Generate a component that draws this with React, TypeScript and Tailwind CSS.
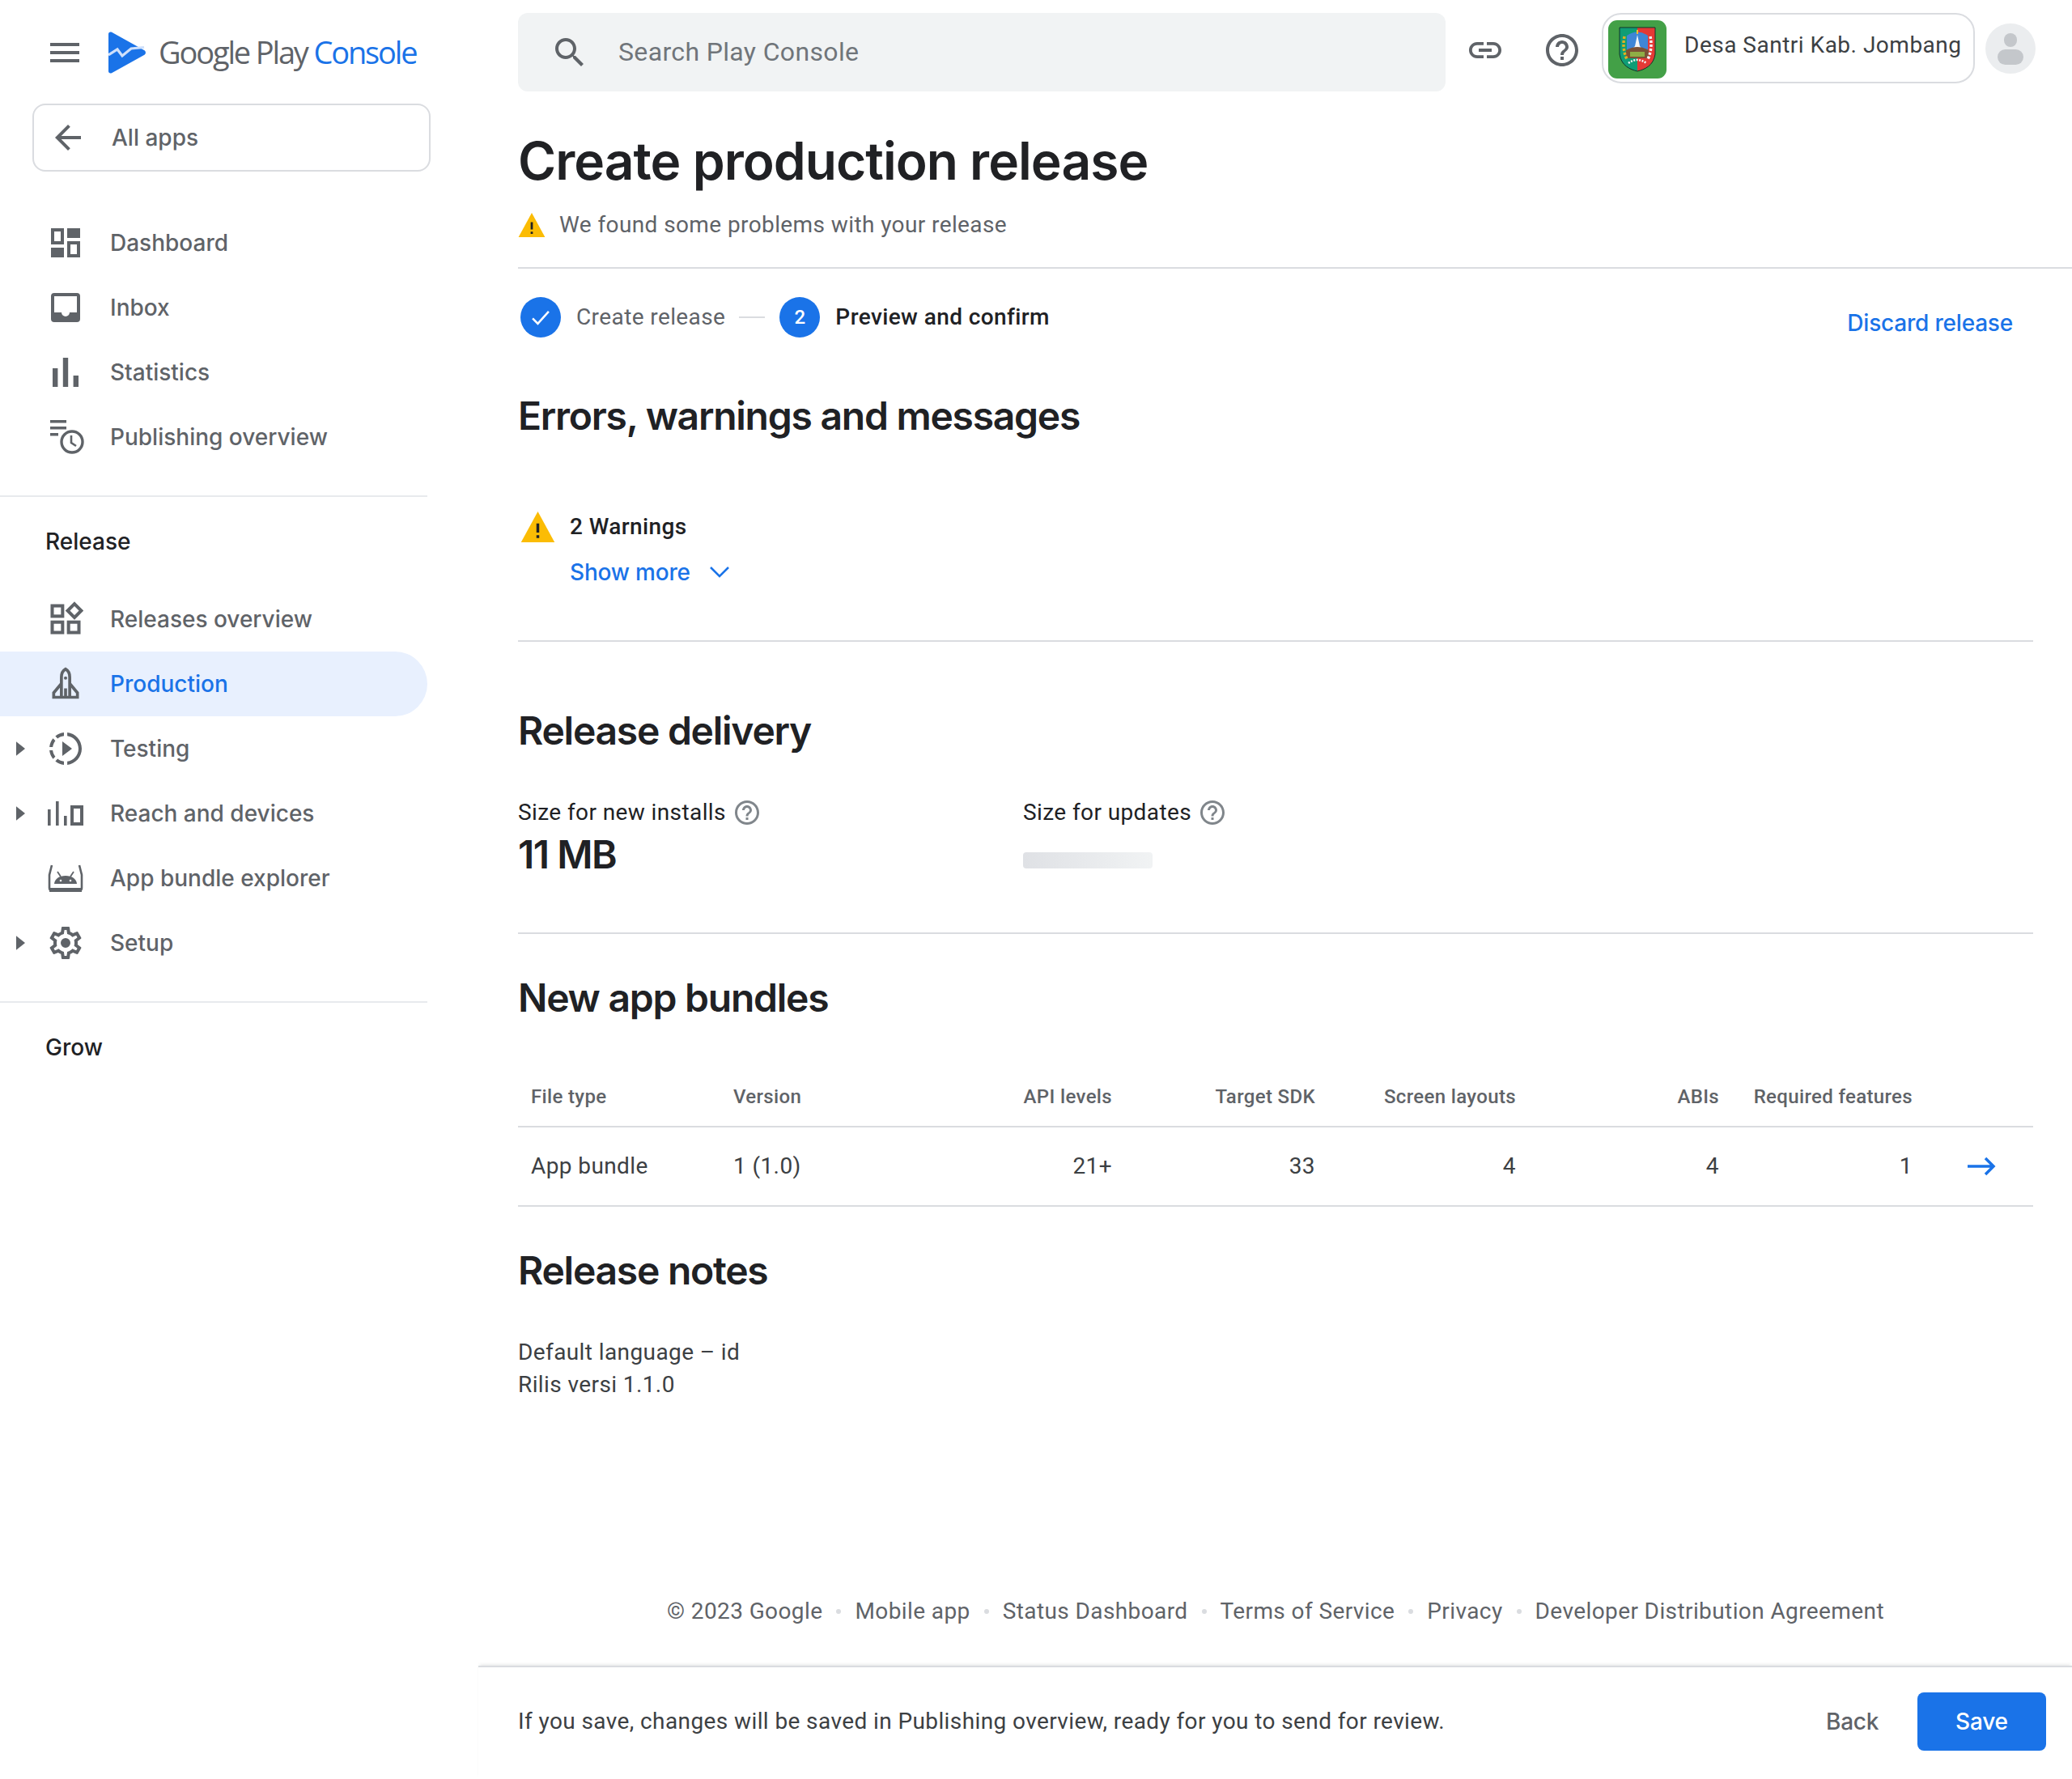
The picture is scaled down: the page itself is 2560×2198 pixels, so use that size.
import React from "react";

const roboto = "font-['Roboto',sans-serif]";
const gsans = "font-['Inter',sans-serif]";

function I({ d, c = "", vb = "0 0 24 24", evenodd = false }: { d: string; c?: string; vb?: string; evenodd?: boolean }) {
  return (
    <svg viewBox={vb} className={c} fill="currentColor" aria-hidden="true">
      <path d={d} fillRule={evenodd ? "evenodd" : "nonzero"} />
    </svg>
  );
}

const P = {
  menu: "M3 18h18v-2H3v2zm0-5h18v-2H3v2zm0-7v2h18V6H3z",
  back: "M20 11H7.83l5.59-5.59L12 4l-8 8 8 8 1.41-1.41L7.83 13H20v-2z",
  dash: "M3 3h8v10H3zM5 5v6h4V5zM13 3h8v6h-8zM3 15h8v6H3zM13 11h8v10h-8zM15 13v6h4v-6z",
  inbox: "M5 3h14a2 2 0 0 1 2 2v14a2 2 0 0 1-2 2H5a2 2 0 0 1-2-2V5a2 2 0 0 1 2-2zM5 5v10h4.5a2.5 2.5 0 0 0 5 0H19V5z",
  stats: "M4 9.5h3.2V21H4zM10.4 3h3.2v18h-3.2zM16.8 14H20v7h-3.2z",
  slow: "M10 7.5v9l6-4.5-6-4.5zM11 4.07V2.05c-2.01.2-3.84 1-5.32 2.21L7.1 5.69c1.11-.86 2.44-1.44 3.9-1.62zM5.69 7.1L4.26 5.68C3.05 7.16 2.25 8.99 2.05 11h2.02c.18-1.46.76-2.79 1.62-3.9zM4.07 13H2.05c.2 2.01 1 3.84 2.21 5.32l1.43-1.43c-.86-1.1-1.44-2.43-1.62-3.89zm1.61 6.74C7.16 20.95 9 21.75 11 21.95v-2.02c-1.46-.18-2.79-.76-3.9-1.62l-1.42 1.43zM22 12c0 5.16-3.92 9.42-8.94 9.95v-2.02C16.97 19.41 20 16.05 20 12s-3.03-7.41-6.94-7.93V2.05C18.08 2.58 22 6.84 22 12z",
  gear: "M19.43 12.98c.04-.32.07-.64.07-.98 0-.34-.03-.66-.07-.98l2.11-1.65c.19-.15.24-.42.12-.64l-2-3.46c-.09-.16-.26-.25-.44-.25-.06 0-.12.01-.17.03l-2.49 1c-.52-.4-1.08-.73-1.69-.98l-.38-2.65C14.46 2.18 14.25 2 14 2h-4c-.25 0-.46.18-.49.42l-.38 2.65c-.61.25-1.17.59-1.69.98l-2.49-1c-.06-.02-.12-.03-.18-.03-.17 0-.34.09-.43.25l-2 3.46c-.13.22-.07.49.12.64l2.11 1.65c-.04.32-.07.65-.07.98 0 .33.03.66.07.98l-2.11 1.65c-.19.15-.24.42-.12.64l2 3.46c.09.16.26.25.44.25.06 0 .12-.01.17-.03l2.49-1c.52.4 1.08.73 1.69.98l.38 2.65c.03.24.24.42.49.42h4c.25 0 .46-.18.49-.42l.38-2.65c.61-.25 1.17-.59 1.69-.98l2.49 1c.06.02.12.03.18.03.17 0 .34-.09.43-.25l2-3.46c.12-.22.07-.49-.12-.64l-2.11-1.65zm-1.98-1.71c.04.31.05.52.05.73 0 .21-.02.43-.05.73l-.14 1.13.89.7 1.08.84-.7 1.21-1.27-.51-1.04-.42-.9.68c-.43.32-.84.56-1.25.73l-1.06.43-.16 1.13-.2 1.35h-1.4l-.19-1.35-.16-1.13-1.06-.43c-.43-.18-.83-.41-1.23-.71l-.91-.7-1.06.43-1.27.51-.7-1.21 1.08-.84.89-.7-.14-1.13c-.03-.31-.05-.54-.05-.74s.02-.43.05-.73l.14-1.13-.89-.7-1.08-.84.7-1.21 1.27.51 1.04.42.9-.68c.43-.32.84-.56 1.25-.73l1.06-.43.16-1.13.2-1.35h1.39l.19 1.35.16 1.13 1.06.43c.43.18.83.41 1.23.71l.91.7 1.06-.43 1.27-.51.7 1.21-1.07.85-.89.7.14 1.13zM12 9a3 3 0 1 0 0 6 3 3 0 0 0 0-6z",
  help: "M11 18h2v-2h-2v2zm1-16C6.48 2 2 6.48 2 12s4.48 10 10 10 10-4.48 10-10S17.52 2 12 2zm0 18c-4.41 0-8-3.59-8-8s3.59-8 8-8 8 3.59 8 8-3.59 8-8 8zm0-14c-2.21 0-4 1.79-4 4h2c0-1.1.9-2 2-2s2 .9 2 2c0 2-3 1.75-3 5h2c0-2.25 3-2.5 3-5 0-2.21-1.79-4-4-4z",
  link: "M3.9 12c0-1.71 1.39-3.1 3.1-3.1h4V7H7c-2.76 0-5 2.24-5 5s2.24 5 5 5h4v-1.9H7c-1.71 0-3.1-1.39-3.1-3.1zM8 13h8v-2H8v2zm9-6h-4v1.9h4c1.71 0 3.1 1.39 3.1 3.1s-1.39 3.1-3.1 3.1h-4V17h4c2.76 0 5-2.24 5-5s-2.24-5-5-5z",
  search: "M15.5 14h-.79l-.28-.27C15.41 12.59 16 11.11 16 9.5 16 5.91 13.09 3 9.5 3S3 5.91 3 9.5 5.91 16 9.5 16c1.61 0 3.09-.59 4.23-1.57l.27.28v.79l5 4.99L20.49 19l-4.99-5zm-6 0C7.01 14 5 11.99 5 9.5S7.01 5 9.5 5 14 7.01 14 9.5 11.99 14 9.5 14z",
};

function PublishIcon({ c }: { c: string }) {
  return (
    <svg viewBox="0 0 42 44" className={c} fill="none" aria-hidden="true">
      <path d="M0 1h20v3.4H0zM0 9h20v3.4H0zM0 17h10v3.4H0z" fill="currentColor" />
      <circle cx="27" cy="28" r="13" stroke="currentColor" strokeWidth="3.4" />
      <path d="M26 20v9l6 4" stroke="currentColor" strokeWidth="2.6" />
    </svg>
  );
}
function CatIcon({ c }: { c: string }) {
  return (
    <svg viewBox="0 0 24 24" className={c} fill="none" stroke="currentColor" strokeWidth="2.2" aria-hidden="true">
      <rect x="3" y="3" width="7" height="7" />
      <rect x="3" y="14" width="7" height="7" />
      <rect x="14" y="14" width="7" height="7" />
      <path d="M18 1.7l4.6 4.6-4.6 4.6-4.6-4.6z" />
    </svg>
  );
}
function RocketIcon({ c }: { c: string }) {
  return (
    <svg viewBox="0 0 24 24" className={c} fill="none" stroke="currentColor" strokeWidth="2" aria-hidden="true">
      <path d="M9.2 21V7.5C9.2 4.5 10.6 2.8 12 2c1.4.8 2.8 2.5 2.8 5.5V21" />
      <path d="M9 12l-5 6v3h16v-3l-5-6" />
      <path d="M12 15v6" />
      <circle cx="12" cy="8" r="1.1" fill="currentColor" stroke="none" />
    </svg>
  );
}
function ReachIcon({ c }: { c: string }) {
  return (
    <svg viewBox="0 0 44 30" className={c} fill="currentColor" aria-hidden="true">
      <path d="M0 10h3.6v20H0zM10 0h3.6v30H10zM20 18h3.6v12H20z" />
      <path fillRule="evenodd" d="M28 5h16v25H28zM32 9v17h8V9z" />
    </svg>
  );
}
function BundleIcon({ c }: { c: string }) {
  return (
    <svg viewBox="0 0 44 34" className={c} aria-hidden="true">
      <path d="M5 1L2 13v16q0 3 3 3h34q3 0 3-3V13L39 1" fill="none" stroke="currentColor" strokeWidth="2.6" />
      <path d="M2 29h40v5H2z" fill="currentColor" />
      <path d="M8 24c.5-6 6-10 14-10s13.5 4 14 10z" fill="currentColor" />
      <path d="M12 9l4 6M32 9l-4 6" stroke="currentColor" strokeWidth="1.8" />
      <circle cx="16" cy="20" r="1.3" fill="#fff" />
      <circle cx="28" cy="20" r="1.3" fill="#fff" />
    </svg>
  );
}
function Logo() {
  return (
    <svg viewBox="0 0 46 52" className="h-[52px] w-[46px] shrink-0" aria-hidden="true">
      <path d="M4 0.8C2 -.2 0 1 0 3v46c0 2 2 3.2 4 2.2L44 29c2.6-1.3 2.6-4.7 0-6z" fill="#1a73e8" />
      <path d="M0 29l11-7 6 8 11-9 16-1.5" fill="none" stroke="#cfe0fb" strokeWidth="3.2" />
    </svg>
  );
}
function Emblem() {
  return (
    <svg viewBox="0 0 72 72" className="h-[72px] w-[72px] shrink-0" aria-hidden="true">
      <rect width="72" height="72" rx="11" fill="#43a047" />
      <path d="M14 9h22v54c-9-2-20-7-22-21z" fill="#0f9d76" />
      <path d="M36 9h22v33c-2 14-13 19-22 21z" fill="#e53935" />
      <path d="M14 9h44v33c-2 14-13 19-22 21-9-2-20-7-22-21z" fill="none" stroke="#12352a" strokeWidth="1" />
      <path d="M23 19q13-9 26 0v27H23z" fill="#3f86d6" />
      <path d="M33 32l3-14 3 14 4 4H29z" fill="#f5f5f5" />
      <path d="M35 12h2v5h-2z" fill="#fbc02d" />
      <path d="M22 37q14-8 28 0v10H22z" fill="#7b5236" />
      <path d="M27 39h18v6H27z" fill="#8fae45" />
      <path d="M20 20q-3 15 3 28" fill="none" stroke="#e0b020" strokeWidth="3.5" strokeDasharray="3 2" />
      <path d="M52 20q3 15-3 28" fill="none" stroke="#f5f5f5" strokeWidth="3.5" strokeDasharray="3 2" />
      <path d="M25 53q11-8 22 0" fill="none" stroke="#f5f5f5" strokeWidth="2.5" strokeDasharray="2 1.5" />
    </svg>
  );
}

function NavRow({ icon, label, active, caret }: { icon: React.ReactNode; label: string; active?: boolean; caret?: boolean }) {
  return (
    <div className={`relative flex h-[80px] w-[528px] items-center rounded-r-[40px] ${active ? "bg-[#e8f0fe]" : ""}`}>
      {caret && (
        <svg viewBox="0 0 10 16" className="absolute left-[20px] top-[31px] h-[18px] w-[11px] text-[#5f6368]" fill="currentColor" aria-hidden="true">
          <path d="M0 0l10 8-10 8z" />
        </svg>
      )}
      <div className="flex w-[136px] shrink-0 justify-center pl-[25px] text-[#5f6368]">{icon}</div>
      <span className={`${gsans} -mt-[1px] text-[28px] font-medium ${active ? "text-[#1a73e8]" : "text-[#5f6368]"}`}>{label}</span>
    </div>
  );
}

function Sidebar() {
  return (
    <aside className="w-[528px] shrink-0">
      <div className="flex h-[128px] items-center pl-[62px] pt-[1px]">
        <I d={P.menu} c="-ml-[6px] h-[48px] w-[48px] shrink-0 text-[#5f6368]" />
        <div className="ml-[30px]"><Logo /></div>
        <div className={`ml-[16px] whitespace-nowrap font-['Open_Sans',sans-serif] text-[38px] font-medium tracking-[-2.15px] text-[#5f6368]`}>
          Google Play <span className="text-[#1a73e8]">Console</span>
        </div>
      </div>
      <div className="ml-[40px] flex h-[84px] w-[492px] items-center rounded-[16px] border-2 border-[#dadce0] pl-[18px]">
        <I d={P.back} c="h-[48px] w-[48px] text-[#5f6368]" />
        <span className={`${gsans} ml-[30px] text-[28px] font-medium text-[#5f6368]`}>All apps</span>
      </div>
      <div className="mt-[48px]">
        <NavRow label="Dashboard" icon={<I d={P.dash} c="h-[48px] w-[48px]" evenodd />} />
        <NavRow label="Inbox" icon={<I d={P.inbox} c="h-[48px] w-[48px]" evenodd />} />
        <NavRow label="Statistics" icon={<I d={P.stats} c="h-[48px] w-[48px]" />} />
        <NavRow label="Publishing overview" icon={<PublishIcon c="ml-[4px] h-[44px] w-[42px]" />} />
      </div>
      <div className="mt-[32px] h-[2px] w-[528px] bg-[#e8eaed]" />
      <div className={`${gsans} pl-[56px] pt-[35px] text-[28px] font-medium leading-[40px] text-[#202124]`}>Release</div>
      <div className="mt-[36px]">
        <NavRow label="Releases overview" icon={<CatIcon c="h-[44px] w-[44px]" />} />
        <NavRow active label="Production" icon={<RocketIcon c="h-[48px] w-[44px]" />} />
        <NavRow caret label="Testing" icon={<I d={P.slow} c="h-[48px] w-[48px]" />} />
        <NavRow caret label="Reach and devices" icon={<ReachIcon c="h-[30px] w-[44px]" />} />
        <NavRow label="App bundle explorer" icon={<BundleIcon c="h-[34px] w-[44px]" />} />
        <NavRow caret label="Setup" icon={<I d={P.gear} c="h-[48px] w-[48px]" />} />
      </div>
      <div className="mt-[32px] h-[2px] w-[528px] bg-[#e8eaed]" />
      <div className={`${gsans} pl-[56px] pt-[35px] text-[28px] font-medium leading-[40px] text-[#202124]`}>Grow</div>
    </aside>
  );
}

function Warn({ c }: { c: string }) {
  return (
    <svg viewBox="0 0 24 22" className={c} aria-hidden="true">
      <path d="M0 22L12 0l12 22z" fill="#fbbc04" />
      <path d="M11 8.5h2v6.5h-2zM11 17h2v2h-2z" fill="#202124" />
    </svg>
  );
}

const h2 = `${gsans} text-[48px] font-semibold leading-[60px] tracking-[-1.25px] text-[#202124]`;
const body = `${roboto} text-[28px] leading-[40px] tracking-[0.4px]`;
const linkText = `${gsans} text-[28px] font-medium leading-[40px] tracking-[-0.2px] text-[#1a73e8]`;

function Sep({ c = "" }: { c?: string }) {
  return <div className={`h-[2px] bg-[#dadce0] ${c}`} />;
}

function Help() {
  return <I d={P.help} c="ml-[8px] h-[36px] w-[36px] text-[#80868b]" />;
}

function Table() {
  const th = `${roboto} pb-[20px] text-[24px] font-medium leading-[32px] tracking-[0.35px] text-[#5f6368]`;
  const td = `${roboto} text-[28px] tracking-[0.4px] text-[#3c4043]`;
  return (
    <table className="mt-[76px] w-[1872px] table-fixed border-collapse">
      <colgroup>
        <col className="w-[250px]" />
        <col className="w-[250px]" />
        <col className="w-[250px]" />
        <col className="w-[251px]" />
        <col className="w-[248px]" />
        <col className="w-[251px]" />
        <col className="w-[239px]" />
        <col />
      </colgroup>
      <thead>
        <tr className="border-b-2 border-[#dadce0]">
          <th className={`${th} pl-[16px] text-left`}>File type</th>
          <th className={`${th} pl-[16px] text-left`}>Version</th>
          <th className={`${th} pr-[16px] text-right`}>API levels</th>
          <th className={`${th} pr-[16px] text-right`}>Target SDK</th>
          <th className={`${th} pr-[16px] text-right`}>Screen layouts</th>
          <th className={`${th} pr-[16px] text-right`}>ABIs</th>
          <th className={`${th} pr-[16px] text-right`}>Required features</th>
          <th />
        </tr>
      </thead>
      <tbody>
        <tr className="h-[98px] border-b-2 border-[#dadce0]">
          <td className={`${td} pl-[16px] text-left`}>App bundle</td>
          <td className={`${td} pl-[16px] text-left`}>1 (1.0)</td>
          <td className={`${td} pr-[16px] text-right`}>21+</td>
          <td className={`${td} pr-[16px] text-right`}>33</td>
          <td className={`${td} pr-[16px] text-right`}>4</td>
          <td className={`${td} pr-[16px] text-right`}>4</td>
          <td className={`${td} pr-[16px] text-right`}>1</td>
          <td>
            <svg viewBox="0 0 36 24" className="ml-[51px] h-[24px] w-[36px] text-[#1a73e8]" fill="none" stroke="currentColor" strokeWidth="3.5" aria-hidden="true">
              <path d="M1 12h32M23 2l10 10-10 10" />
            </svg>
          </td>
        </tr>
      </tbody>
    </table>
  );
}

function Main() {
  const dot = <span className="mx-[17px] h-[6px] w-[6px] self-center rounded-full bg-[#dadce0]" />;
  return (
    <main className="ml-[63px] flex min-w-0 flex-1 flex-col">
      <div className="flex-1 pl-[49px] pr-[48px]">
        <div className="flex items-start pt-[16px]">
          <div className="flex h-[97px] w-[1146px] shrink-0 items-center rounded-[12px] bg-[#f1f3f4] pl-[40px]">
            <I d={P.search} c="h-[48px] w-[48px] text-[#5f6368]" />
            <span className={`${roboto} -mt-[2px] ml-[36px] text-[32px] tracking-[0.35px] text-[#70757a]`}>Search Play Console</span>
          </div>
          <I d={P.link} c="ml-[25px] mt-[22px] h-[48px] w-[48px] shrink-0 text-[#5f6368]" />
          <I d={P.help} c="ml-[47px] mt-[22px] h-[48px] w-[48px] shrink-0 text-[#5f6368]" />
          <div className="ml-[25px] flex h-[87px] w-[461px] shrink-0 items-start rounded-[24px] border-2 border-[#dadce0] pl-[6px] pt-[7px]">
            <Emblem />
            <span className={`${roboto} ml-[22px] mt-[11px] whitespace-nowrap text-[28px] leading-[40px] tracking-[0.5px] text-[#3c4043]`}>Desa Santri Kab. Jombang</span>
          </div>
          <div className="ml-[13px] mt-[13px] flex h-[62px] w-[62px] shrink-0 flex-col items-center justify-center rounded-full bg-[#ebedef]">
            <div className="h-[17px] w-[16px] rounded-full bg-[#c4c7cb]" />
            <div className="mt-[3px] h-[19px] w-[32px] rounded-full bg-[#c4c7cb]" />
          </div>
        </div>

        <h1 className={`${gsans} mt-[42px] text-[64px] font-semibold leading-[88px] tracking-[-0.95px] text-[#202124]`}>Create production release</h1>

        <div className="mt-[15px] flex h-[40px] items-center">
          <Warn c="h-[30px] w-[34px]" />
          <span className={`${body} ml-[17px] text-[#5f6368]`}>We found some problems with your release</span>
        </div>
        <Sep c="-mr-[48px] mt-[32px]" />

        <div className="mt-[35px] flex h-[50px] items-center pl-[3px]">
          <div className="flex h-[50px] w-[50px] items-center justify-center rounded-full bg-[#1a73e8]">
            <svg viewBox="0 0 24 24" className="h-[34px] w-[34px]" fill="none" stroke="#fff" strokeWidth="1.8" aria-hidden="true"><path d="M5 13l4.5 4.5L19 7" /></svg>
          </div>
          <span className={`${body} ml-[19px] text-[#5f6368]`}>Create release</span>
          <div className="ml-[17px] h-[2px] w-[32px] bg-[#dadce0]" />
          <div className={`${roboto} ml-[18px] flex h-[50px] w-[50px] items-center justify-center rounded-full bg-[#1a73e8] text-[24px] font-medium text-white`}>2</div>
          <span className={`${body} ml-[19px] font-medium text-[#202124]`}>Preview and confirm</span>
          <span className={`${linkText} ml-auto mr-[25px] mt-[14px]`}>Discard release</span>
        </div>

        <h2 className={`${h2} mt-[67px]`}>Errors, warnings and messages</h2>

        <div className="mt-[87px] flex h-[40px] items-center pl-[3px]">
          <Warn c="h-[38px] w-[43px]" />
          <span className={`${body} ml-[18px] font-medium text-[#202124]`}>2 Warnings</span>
        </div>
        <div className="mt-[16px] flex h-[40px] items-center pl-[64px]">
          <span className={linkText}>Show more</span>
          <svg viewBox="0 0 24 14" className="ml-[24px] h-[14px] w-[24px] text-[#1a73e8]" fill="none" stroke="currentColor" strokeWidth="2.5" aria-hidden="true"><path d="M1 1l11 11L23 1" /></svg>
        </div>
        <Sep c="mt-[64px]" />

        <h2 className={`${h2} mt-[80px]`}>Release delivery</h2>
        <div className="mt-[51px] flex">
          <div className="w-[624px]">
            <div className="flex h-[40px] items-center">
              <span className={`${body} text-[#202124]`}>Size for new installs</span>
              <Help />
            </div>
            <div className={`${gsans} mt-[4px] text-[48px] font-semibold leading-[56px] tracking-[-1.5px] text-[#202124]`}>11 MB</div>
          </div>
          <div>
            <div className="flex h-[40px] items-center">
              <span className={`${body} text-[#202124]`}>Size for updates</span>
              <Help />
            </div>
            <div className="mt-[29px] h-[20px] w-[160px] rounded-[4px] bg-gradient-to-r from-[#dfe1e5] to-[#f1f3f4]" />
          </div>
        </div>
        <Sep c="mt-[68px]" />

        <h2 className={`${h2} mt-[49px]`}>New app bundles</h2>
        <Table />

        <h2 className={`${h2} mt-[49px]`}>Release notes</h2>
        <div className={`${body} mt-[51px] text-[#3c4043]`}>Default language – id</div>
        <div className={`${body} text-[#3c4043]`}>Rilis versi 1.1.0</div>
      </div>

      <div className={`${body} flex justify-center pb-[47px] pl-[49px] pr-[48px] text-[#5f6368]`}>
        <span>© 2023 Google</span>{dot}<span>Mobile app</span>{dot}<span>Status Dashboard</span>{dot}<span>Terms of Service</span>{dot}<span>Privacy</span>{dot}<span>Developer Distribution Agreement</span>
      </div>
      <div className="flex h-[140px] items-center border-t-2 border-[#dadce0] pb-[4px] pl-[49px] pr-[32px] shadow-[0_-3px_4px_-2px_rgba(60,64,67,0.15)]">
        <span className={`${body} text-[#3c4043]`}>If you save, changes will be saved in Publishing overview, ready for you to send for review.</span>
        <span className={`${gsans} ml-auto text-[28px] font-medium leading-[40px] tracking-[-0.3px] text-[#5f6368]`}>Back</span>
        <div className={`${gsans} ml-[48px] flex h-[72px] w-[159px] items-center justify-center rounded-[8px] bg-[#1a73e8] text-[28px] font-medium tracking-[-0.2px] text-white`}>Save</div>
      </div>
    </main>
  );
}

export default function App() {
  return (
    <div className="flex h-[2198px] w-[2560px] bg-white">
      <Sidebar />
      <Main />
    </div>
  );
}
